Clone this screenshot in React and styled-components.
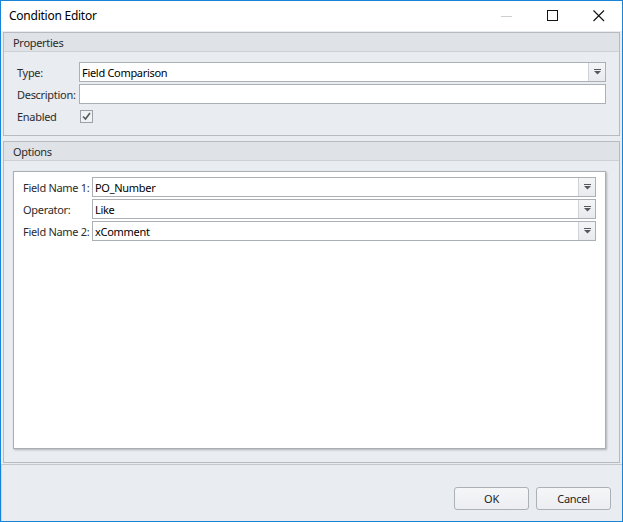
import React from "react";
import styled, { createGlobalStyle } from "styled-components";

const Global = createGlobalStyle`
  html, body { margin: 0; padding: 0; background: #ffffff; }
  body { font-family: "Noto Sans", "Open Sans", sans-serif; }
  * { box-sizing: border-box; }
`;

const Window = styled.div`
  width: 623px;
  height: 522px;
  border: 1px solid #1883d7;
  display: flex;
  flex-direction: column;
  background: #e9ecf1;
  font-family: "Noto Sans", "Open Sans", sans-serif;
  font-size: 11px;
  letter-spacing: -0.3px;
  color: #1e1e1e;
`;

const TitleBar = styled.div`
  height: 30px;
  background: #ffffff;
  display: flex;
  align-items: center;
  padding-left: 8px;
  flex-shrink: 0;
`;

const Title = styled.div`
  flex: 1;
  font-size: 12px;
  letter-spacing: -0.25px;
  color: #000;
  padding-bottom: 1px;
`;

const Caption = styled.div`
  width: 46px;
  height: 30px;
  display: flex;
  align-items: center;
  justify-content: center;
`;

const Main = styled.div`
  flex: 1;
  display: flex;
  flex-direction: column;
  gap: 5px;
  padding: 1px 2px 1px 2px;
`;

const Group = styled.div`
  border: 1px solid #b7bbc1;
  background: #e9ecf1;
  display: flex;
  flex-direction: column;
  flex: ${(p) => (p.$grow ? 1 : "none")};
`;

const GroupHeader = styled.div`
  height: 19px;
  background: #dfe2e7;
  border-bottom: 1px solid #cdd1d6;
  padding-left: 9px;
  padding-top: 1px;
  display: flex;
  align-items: center;
  color: #2b2b2b;
`;

const PropGrid = styled.div`
  display: grid;
  grid-template-columns: 62px 1fr;
  grid-auto-rows: 20px;
  row-gap: 2px;
  padding: 10px 13px 9px 13px;
`;

const Label = styled.div`
  display: flex;
  align-items: center;
  color: #2b2b2b;
  white-space: nowrap;
  padding-top: 1px;
`;

const FieldBox = styled.div`
  height: 20px;
  border: 1px solid #abb0b6;
  background: #ffffff;
  display: flex;
  align-items: stretch;
`;

const FieldText = styled.div`
  flex: 1;
  display: flex;
  align-items: center;
  padding-left: 2px;
  padding-top: 1px;
  color: #000;
`;

const DropButton = styled.div`
  width: 17px;
  border-left: 1px solid #cfd3d8;
  background: linear-gradient(#f4f5f7, #e8eaee);
  display: flex;
  align-items: center;
  justify-content: center;
`;

const CheckCell = styled.div`
  display: flex;
  align-items: center;
  padding-left: 1px;
`;

const CheckBox = styled.div`
  width: 13px;
  height: 13px;
  border: 1px solid #9ca1a7;
  background: #f1f2f4;
  display: flex;
  align-items: center;
  justify-content: center;
`;

const OptionsBody = styled.div`
  flex: 1;
  display: flex;
  padding: 10px 13px 13px 9px;
`;

const Panel = styled.div`
  flex: 1;
  background: #ffffff;
  border: 1px solid #a9aeb4;
  box-shadow: 1px 1px 2px rgba(0, 0, 0, 0.25);
  padding: 5px 9px 0 9px;
`;

const OptGrid = styled.div`
  display: grid;
  grid-template-columns: 69px 1fr;
  grid-auto-rows: 20px;
  row-gap: 2px;
`;

const Footer = styled.div`
  height: 57px;
  flex-shrink: 0;
  border-top: 1px solid #c4c8cd;
  border-left: 1px solid #d2d5da;
  display: flex;
  justify-content: flex-end;
  align-items: flex-end;
  gap: 7px;
  padding: 0 11px 11px 0;
`;

const Button = styled.div`
  width: 75px;
  height: 23px;
  border: 1px solid #acb1b7;
  border-radius: 3px;
  background: linear-gradient(#f5f6f8, #eceef1);
  display: flex;
  align-items: center;
  justify-content: center;
  color: #1e1e1e;
`;

const Arrow = () => (
  <svg width="7" height="6" viewBox="0 0 7 6">
    <rect x="0" y="0" width="7" height="1" fill="#55595e" />
    <path d="M0 2 H7 L3.5 5.5 Z" fill="#55595e" />
  </svg>
);

const Combo = ({ value }) => (
  <FieldBox>
    <FieldText>{value}</FieldText>
    <DropButton>
      <Arrow />
    </DropButton>
  </FieldBox>
);

export default function App() {
  return (
    <>
      <Global />
      <Window>
        <TitleBar>
          <Title>Condition Editor</Title>
          <Caption>
            <svg width="12" height="12" viewBox="0 0 12 12">
              <rect x="0" y="6" width="11" height="1" fill="#cfcfcf" />
            </svg>
          </Caption>
          <Caption>
            <svg width="12" height="12" viewBox="0 0 12 12">
              <rect x="0.5" y="0.5" width="10" height="10" fill="none" stroke="#111" strokeWidth="1" />
            </svg>
          </Caption>
          <Caption>
            <svg width="12" height="12" viewBox="0 0 12 12">
              <path d="M0.5 0.5 L11 11 M11 0.5 L0.5 11" stroke="#111" strokeWidth="1.1" />
            </svg>
          </Caption>
        </TitleBar>
        <Main>
          <Group>
            <GroupHeader>Properties</GroupHeader>
            <PropGrid>
              <Label>Type:</Label>
              <Combo value="Field Comparison" />
              <Label>Description:</Label>
              <FieldBox>
                <FieldText />
              </FieldBox>
              <Label>Enabled</Label>
              <CheckCell>
                <CheckBox>
                  <svg width="9" height="9" viewBox="0 0 9 9">
                    <path d="M1 4.5 L3.5 7 L8 1" stroke="#555a60" strokeWidth="1.6" fill="none" />
                  </svg>
                </CheckBox>
              </CheckCell>
            </PropGrid>
          </Group>
          <Group $grow>
            <GroupHeader>Options</GroupHeader>
            <OptionsBody>
              <Panel>
                <OptGrid>
                  <Label>Field Name 1:</Label>
                  <Combo value="PO_Number" />
                  <Label>Operator:</Label>
                  <Combo value="Like" />
                  <Label>Field Name 2:</Label>
                  <Combo value="xComment" />
                </OptGrid>
              </Panel>
            </OptionsBody>
          </Group>
        </Main>
        <Footer>
          <Button>OK</Button>
          <Button>Cancel</Button>
        </Footer>
      </Window>
    </>
  );
}
